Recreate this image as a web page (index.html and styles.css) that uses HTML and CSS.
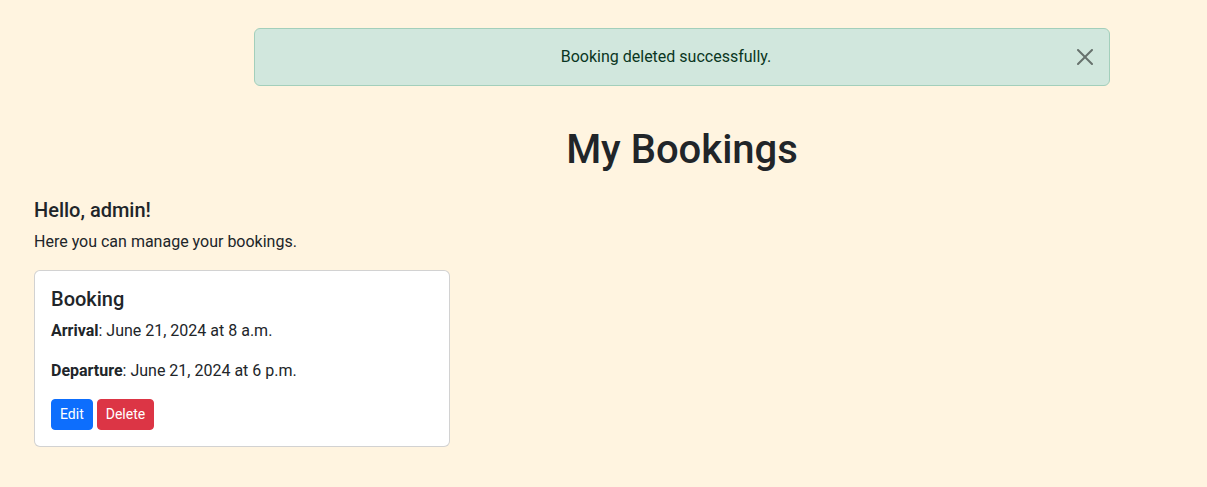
FILE: index.html
```html
<!DOCTYPE html>
<html lang="en">
<head>
<meta charset="utf-8">
<title>My Bookings</title>
<link rel="stylesheet" href="styles.css">
</head>
<body>
<main class="page">
  <div class="top">
    <div class="alert" role="alert">
      <span class="alert-text">Booking deleted successfully.</span>
      <button class="btn-close" type="button" aria-label="Close">
        <svg viewBox="0 0 16 16" width="16" height="16" aria-hidden="true"><path d="M.293.293a1 1 0 0 1 1.414 0L8 6.586 14.293.293a1 1 0 1 1 1.414 1.414L9.414 8l6.293 6.293a1 1 0 0 1-1.414 1.414L8 9.414l-6.293 6.293a1 1 0 0 1-1.414-1.414L6.586 8 .293 1.707a1 1 0 0 1 0-1.414z"/></svg>
      </button>
    </div>
    <h1 class="title">My Bookings</h1>
  </div>
  <section class="content">
    <h5 class="greeting">Hello, admin!</h5>
    <p class="intro">Here you can manage your bookings.</p>
    <div class="card">
      <h5 class="card-title">Booking</h5>
      <p class="line"><strong>Arrival</strong>: June 21, 2024 at 8 a.m.</p>
      <p class="line"><strong>Departure</strong>: June 21, 2024 at 6 p.m.</p>
      <div class="actions">
        <a class="btn btn-primary" href="#">Edit</a>
        <a class="btn btn-danger" href="#">Delete</a>
      </div>
    </div>
  </section>
</main>
</body>
</html>
```

FILE: styles.css
```css
* { box-sizing: border-box; }
html, body { margin: 0; padding: 0; }
body {
  background: #fff4e0;
  color: #212529;
  font-family: Roboto, "Liberation Sans", sans-serif;
  font-size: 16px;
  line-height: 1.5;
}
.page { padding-top: 28px; }
.top {
  width: 856px;
  margin-left: 254px;
}
.alert {
  position: relative;
  background: #d1e7dd;
  border: 1px solid #a3cfbb;
  color: #0a3622;
  border-radius: 6px;
  padding: 16px 48px 16px 16px;
  text-align: center;
  margin-bottom: 40px;
}
.btn-close {
  position: absolute;
  top: 0;
  right: 0;
  height: 100%;
  padding: 0 16px;
  background: transparent;
  border: 0;
  display: flex;
  align-items: center;
  cursor: pointer;
  opacity: .5;
}
.btn-close svg { display: block; fill: #000; }
.title {
  margin: 0;
  font-size: 40px;
  font-weight: 500;
  line-height: 1.2;
  text-align: center;
}
.content {
  padding: 24px 0 0 34px;
}
.greeting {
  margin: 0 0 8px;
  font-size: 20px;
  font-weight: 500;
  line-height: 1.2;
}
.intro { margin: 0 0 16px; }
.card {
  width: 416px;
  background: #fff;
  border: 1px solid rgba(0,0,0,.175);
  border-radius: 6px;
  padding: 16px;
}
.card-title {
  margin: 0 0 8px;
  font-size: 20px;
  font-weight: 500;
  line-height: 1.2;
}
.line { margin: 0 0 16px; }
.line strong { font-weight: 700; }
.actions { line-height: 1.5; }
.btn {
  display: inline-block;
  vertical-align: middle;
  padding: 4px 8px;
  font-size: 14px;
  line-height: 21px;
  border: 1px solid transparent;
  border-radius: 4px;
  color: #fff;
  text-decoration: none;
}
.btn-primary { background: #0d6efd; border-color: #0d6efd; }
.btn-danger { background: #dc3545; border-color: #dc3545; }
```
